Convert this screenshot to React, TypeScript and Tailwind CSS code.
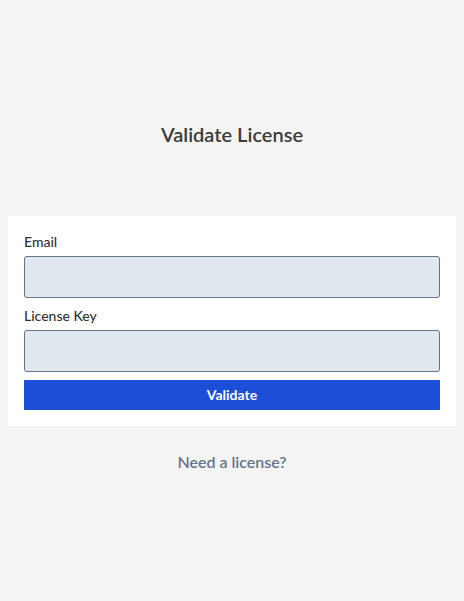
export default function App() {
  return (
    <div
      className="flex min-h-[601px] flex-col bg-[#f4f4f2] px-2"
      style={{ fontFamily: 'Lato, "Open Sans", sans-serif' }}
    >
      <h1 className="mt-[120px] text-center text-[20px] leading-[28px] font-semibold text-[#3b3b3b]">
        Validate License
      </h1>

      <form className="mt-[68px] flex flex-col rounded-[2px] bg-white p-4" onSubmit={(e) => e.preventDefault()}>
        <label className="mb-1 text-sm leading-5 font-medium text-[#333333]">Email</label>
        <input
          type="email"
          className="h-[42px] rounded-[3px] border border-[#64748b] bg-[#e2e8f0] px-2 text-sm outline-none"
        />
        <label className="mt-2 mb-1 text-sm leading-5 font-medium text-[#333333]">License Key</label>
        <input
          type="text"
          className="h-[42px] rounded-[3px] border border-[#64748b] bg-[#e2e8f0] px-2 text-sm outline-none"
        />
        <button
          type="submit"
          className="mt-2 h-[30px] bg-[#1d4ed8] text-sm font-bold text-white"
        >
          Validate
        </button>
      </form>

      <a href="#" className="mt-6 text-center text-base leading-6 font-semibold text-[#64748b]">
        Need a license?
      </a>
    </div>
  );
}
